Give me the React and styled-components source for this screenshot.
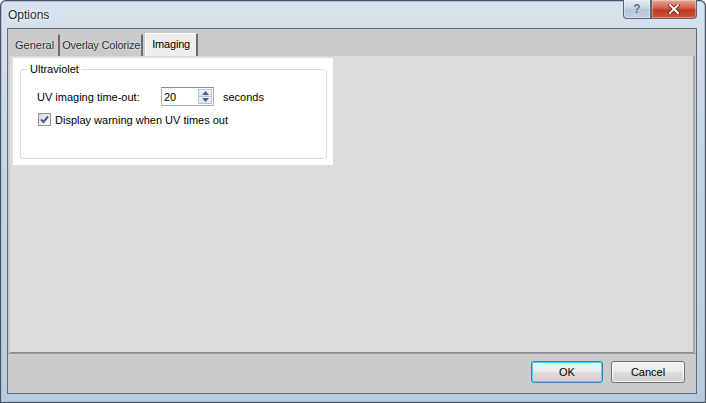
import React from "react";
import styled, { createGlobalStyle } from "styled-components";

const Global = createGlobalStyle`
  html, body { margin: 0; padding: 0; background: #ffffff; }
  body { font-family: "Liberation Sans", Arial, sans-serif; }
  * { box-sizing: border-box; }
`;

const Window = styled.div`
  width: 706px;
  height: 403px;
  display: flex;
  flex-direction: column;
  border-radius: 6px 6px 0 0;
  background: linear-gradient(to bottom, #d7e3ee 0%, #c6d6e5 40%, #b8cbde 100%);
  box-shadow: inset 0 0 0 1px #4a5562, inset 0 0 0 2px #a9bfd6;
`;

const TitleBar = styled.div`
  height: 28px;
  flex: none;
  display: flex;
  justify-content: space-between;
  align-items: flex-start;
  padding: 0 9px 0 8px;
`;

const Title = styled.div`
  margin-top: 8px;
  font-size: 12px;
  color: #1f2a36;
  text-shadow: 0 0 6px #ffffff, 0 0 3px #ffffff;
`;

const Caption = styled.div`
  display: flex;
`;

const CapButton = styled.div`
  width: ${p => p.$w}px;
  height: 19px;
  display: flex;
  align-items: center;
  justify-content: center;
  border: 1px solid #5a6673;
  border-top: none;
  border-radius: ${p => p.$r};
  background: ${p => p.$close
    ? "linear-gradient(to bottom, #e7a896 0%, #d35f49 45%, #c23a22 55%, #d2523a 100%)"
    : "linear-gradient(to bottom, #e3ebf3 0%, #c8d6e4 45%, #b4c6d8 55%, #c3d3e3 100%)"};
  box-shadow: inset 0 0 0 1px rgba(255,255,255,0.35);
  font-size: 12px;
  font-weight: bold;
  color: #65707c;
`;

const Client = styled.div`
  flex: 1;
  margin: 0 9px 9px 7px;
  border: 1px solid #5f6a76;
  background: #cbcbcb;
  display: flex;
  flex-direction: column;
`;

const TabStrip = styled.div`
  height: 27px;
  flex: none;
  display: flex;
  align-items: flex-end;
  padding-left: 2px;
`;

const Tab = styled.div`
  height: ${p => (p.$active ? 23 : 22)}px;
  padding: 0 ${p => p.$pad}px;
  margin-left: ${p => p.$ml || 0}px;
  display: flex;
  align-items: center;
  font-size: 11px;
  letter-spacing: ${p => p.$ls || 0}px;
  color: ${p => (p.$active ? "#000" : "#2a2a2a")};
  background: ${p => (p.$active ? "#efefef" : "transparent")};
  border-left: 1px solid ${p => (p.$active ? "#ffffff" : "transparent")};
  border-top: 1px solid ${p => (p.$active ? "#ffffff" : "transparent")};
  border-right: 2px solid #6d6d6d;
  text-shadow: ${p => (p.$active ? "none" : "0 0 2px #ffffff")};
  padding-bottom: ${p => (p.$active ? 3 : 2)}px;
`;

const Panel = styled.div`
  flex: 1;
  margin: 0 1px 0 2px;
  background: #dcdcdc;
  border-right: 2px solid #a9a9a9;
  border-bottom: 1px solid #8a8a8a;
  padding: 2px 0 0 3px;
`;

const WhiteBox = styled.div`
  width: 320px;
  height: 107px;
  background: #ffffff;
  padding: 5px 6px 6px 7px;
`;

const Group = styled.fieldset`
  margin: 0;
  height: 100%;
  border: 1px solid #d3dde5;
  border-radius: 3px;
  padding: 11px 0 0 16px;
  display: flex;
  flex-direction: column;
  gap: 7px;
`;

const Legend = styled.legend`
  font-size: 11px;
  color: #000;
  padding: 0 2px;
  margin-left: -9px;
  line-height: 13px;
`;

const Row = styled.div`
  display: flex;
  align-items: center;
  font-size: 11px;
  color: #000;
  height: ${p => p.$h}px;
`;

const Label = styled.span`
  width: 124px;
`;

const Spinner = styled.div`
  width: 53px;
  height: 19px;
  border: 1px solid #abadb3;
  border-top-color: #8e8f8f;
  background: #fff;
  display: flex;
  align-items: center;
  justify-content: space-between;
  padding: 0 1px 0 2px;
  margin-right: 9px;
`;

const SpinButtons = styled.div`
  display: flex;
  flex-direction: column;
  width: 14px;
  height: 15px;
`;

const SpinBtn = styled.div`
  flex: 1;
  display: flex;
  align-items: center;
  justify-content: center;
  border: 1px solid #b7c3d2;
  background: linear-gradient(to bottom, #f3f6fa, #dde6f0);
  &:first-child { border-bottom: none; }
`;

const Check = styled.div`
  width: 13px;
  height: 13px;
  border: 1px solid #8e8f8f;
  background: linear-gradient(135deg, #dcdcdc, #ffffff);
  display: flex;
  align-items: center;
  justify-content: center;
  margin: 0 4px 0 1px;
`;

const ButtonBar = styled.div`
  height: 40px;
  flex: none;
  border-top: 1px solid #9c9c9c;
  display: flex;
  justify-content: flex-end;
  align-items: flex-start;
  gap: 8px;
  padding: 7px 11px 0 0;
`;

const Button = styled.div`
  width: ${p => p.$w}px;
  height: 22px;
  border-radius: 3px;
  border: 1px solid ${p => (p.$default ? "#3c7fb1" : "#707070")};
  background: linear-gradient(to bottom, #f2f2f2 0%, #ebebeb 50%, #dddddd 51%, #cfcfcf 100%);
  box-shadow: inset 0 0 0 1px ${p => (p.$default ? "#48d8f5" : "#fafafa")};
  display: flex;
  align-items: center;
  justify-content: center;
  font-size: 11px;
  color: #000;
`;

export default function App() {
  return (
    <>
      <Global />
      <Window>
        <TitleBar>
          <Title>Options</Title>
          <Caption>
            <CapButton $w={28} $r="0 0 0 4px">?</CapButton>
            <CapButton $w={46} $r="0 0 4px 0" $close>
              <svg width="12" height="10" viewBox="0 0 12 10">
                <path d="M2 1 L10 9 M10 1 L2 9" stroke="#5b1a10" strokeWidth="3.6" strokeLinecap="square" />
                <path d="M2 1 L10 9 M10 1 L2 9" stroke="#ffffff" strokeWidth="2" strokeLinecap="square" />
              </svg>
            </CapButton>
          </Caption>
        </TitleBar>
        <Client>
          <TabStrip>
            <Tab $pad={4}>General</Tab>
            <Tab $pad={1} $ls={-0.2}>Overlay Colorize</Tab>
            <Tab $active $pad={6} $ml={2} $ls={-0.2}>Imaging</Tab>
          </TabStrip>
          <Panel>
            <WhiteBox>
              <Group>
                <Legend>Ultraviolet</Legend>
                <Row $h={19}>
                  <Label>UV imaging time-out:</Label>
                  <Spinner>
                    <span>20</span>
                    <SpinButtons>
                      <SpinBtn>
                        <svg width="7" height="4" viewBox="0 0 7 4"><path d="M0 4 L3.5 0 L7 4 Z" fill="#4b5f88" /></svg>
                      </SpinBtn>
                      <SpinBtn>
                        <svg width="7" height="4" viewBox="0 0 7 4"><path d="M0 0 L3.5 4 L7 0 Z" fill="#4b5f88" /></svg>
                      </SpinBtn>
                    </SpinButtons>
                  </Spinner>
                  <span>seconds</span>
                </Row>
                <Row $h={13}>
                  <Check>
                    <svg width="9" height="9" viewBox="0 0 9 9">
                      <path d="M1 4.5 L3.5 7 L8 1.5" fill="none" stroke="#465a8c" strokeWidth="2" />
                    </svg>
                  </Check>
                  <span>Display warning when UV times out</span>
                </Row>
              </Group>
            </WhiteBox>
          </Panel>
          <ButtonBar>
            <Button $default $w={72}>OK</Button>
            <Button $w={74}>Cancel</Button>
          </ButtonBar>
        </Client>
      </Window>
    </>
  );
}
